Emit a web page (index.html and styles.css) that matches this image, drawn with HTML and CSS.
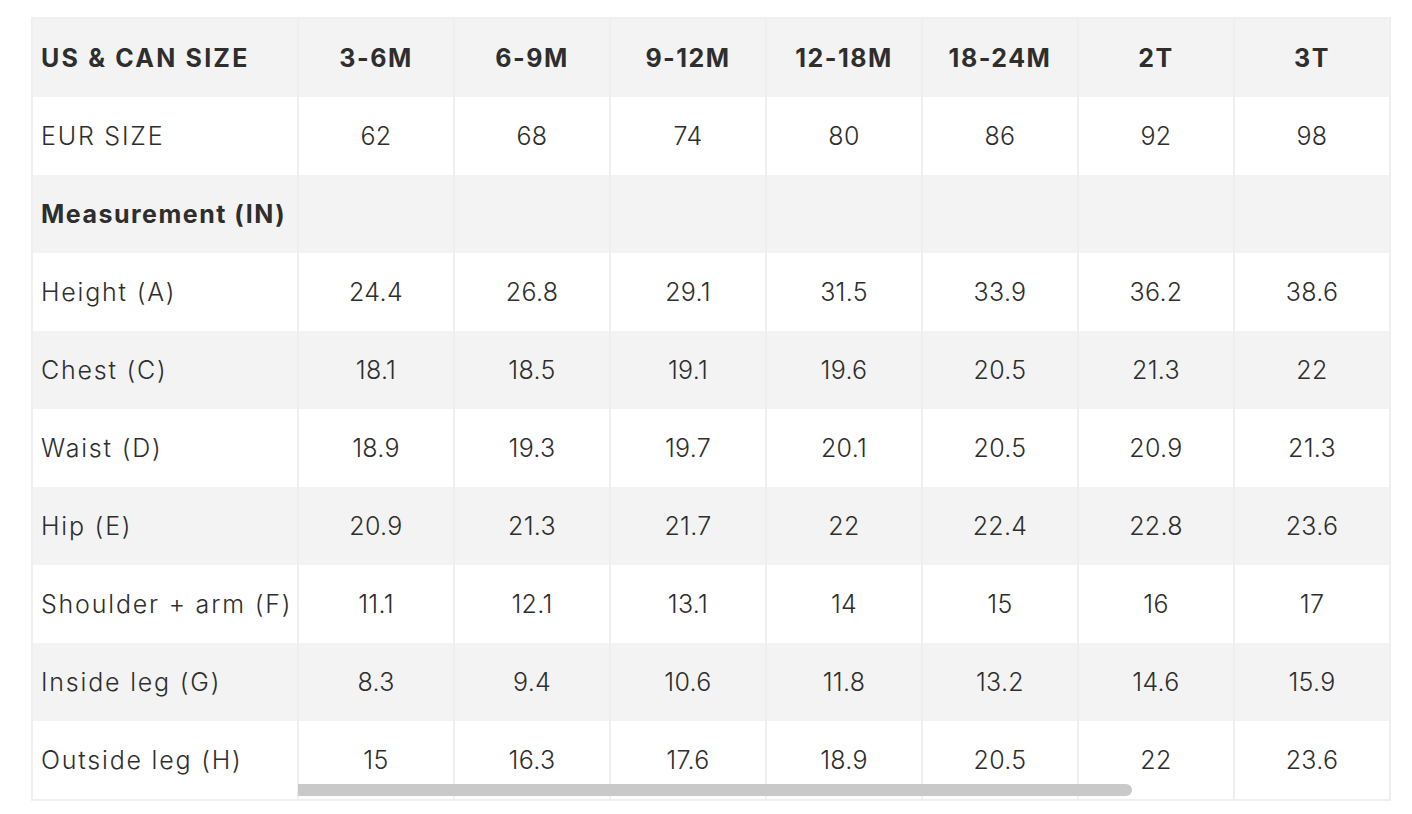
FILE: index.html
```html
<!DOCTYPE html>
<html>
<head>
<meta charset="utf-8">
<link rel="stylesheet" href="styles.css">
</head>
<body>
<div class="wrap">
  <table class="size-table">
    <colgroup>
      <col class="c-label"><col><col><col><col><col><col><col>
    </colgroup>
    <tr class="shade head">
      <th class="label">US &amp; CAN SIZE</th><th>3-6M</th><th>6-9M</th><th>9-12M</th><th>12-18M</th><th>18-24M</th><th>2T</th><th>3T</th>
    </tr>
    <tr>
      <td class="label">EUR SIZE</td><td>62</td><td>68</td><td>74</td><td>80</td><td>86</td><td>92</td><td>98</td>
    </tr>
    <tr class="shade">
      <th class="label">Measurement (IN)</th><td></td><td></td><td></td><td></td><td></td><td></td><td></td>
    </tr>
    <tr>
      <td class="label">Height (A)</td><td>24.4</td><td>26.8</td><td>29.1</td><td>31.5</td><td>33.9</td><td>36.2</td><td>38.6</td>
    </tr>
    <tr class="shade">
      <td class="label">Chest (C)</td><td>18.1</td><td>18.5</td><td>19.1</td><td>19.6</td><td>20.5</td><td>21.3</td><td>22</td>
    </tr>
    <tr>
      <td class="label">Waist (D)</td><td>18.9</td><td>19.3</td><td>19.7</td><td>20.1</td><td>20.5</td><td>20.9</td><td>21.3</td>
    </tr>
    <tr class="shade">
      <td class="label">Hip (E)</td><td>20.9</td><td>21.3</td><td>21.7</td><td>22</td><td>22.4</td><td>22.8</td><td>23.6</td>
    </tr>
    <tr>
      <td class="label">Shoulder + arm (F)</td><td>11.1</td><td>12.1</td><td>13.1</td><td>14</td><td>15</td><td>16</td><td>17</td>
    </tr>
    <tr class="shade">
      <td class="label">Inside leg (G)</td><td>8.3</td><td>9.4</td><td>10.6</td><td>11.8</td><td>13.2</td><td>14.6</td><td>15.9</td>
    </tr>
    <tr>
      <td class="label">Outside leg (H)</td><td>15</td><td>16.3</td><td>17.6</td><td>18.9</td><td>20.5</td><td>22</td><td>23.6</td>
    </tr>
  </table>
  <div class="scrollbar"></div>
</div>
</body>
</html>
```
FILE: styles.css
```css
html, body {
  margin: 0;
  padding: 0;
  background: #ffffff;
}
body {
  font-family: Inter, "Noto Sans", sans-serif;
  color: #2e2e2e;
}
.wrap {
  position: relative;
  width: 1360px;
  padding-top: 17px;
  margin-left: 31px;
}
.size-table {
  width: 1360px;
  border-collapse: collapse;
  table-layout: fixed;
  border: 2px solid #efefef;
}
.c-label {
  width: 266px;
}
.size-table th,
.size-table td {
  height: 78px;
  padding: 0;
  text-align: center;
  vertical-align: middle;
  font-size: 25px;
  font-weight: 300;
  letter-spacing: 0.3px;
  border-left: 2px solid #efefef;
  border-right: 2px solid #efefef;
  white-space: nowrap;
}
.size-table th {
  font-weight: 700;
  letter-spacing: 1.5px;
}
.size-table td.label {
  letter-spacing: 1.8px;
}
.size-table .label {
  text-align: left;
  padding-left: 8px;
}
.head .label {
  letter-spacing: 2.2px;
}
.shade th,
.shade td {
  background: #f3f3f3;
}
.scrollbar {
  position: absolute;
  z-index: 2;
  left: 267px;
  top: 784px;
  width: 834px;
  height: 12px;
  background: #c9c9c9;
  border-radius: 0 6px 6px 0;
}
```
